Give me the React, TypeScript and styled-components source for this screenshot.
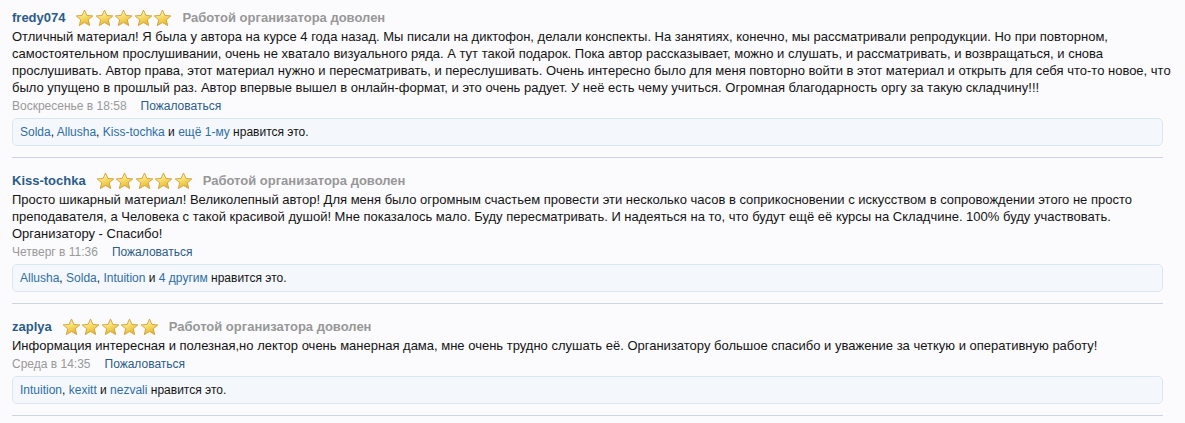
import React from "react";
import styled, { createGlobalStyle } from "styled-components";

const Global = createGlobalStyle`
  html, body { margin: 0; padding: 0; background: #fbfbfd; }
  body { font-family: "Liberation Sans", Arial, sans-serif; }
`;

const Page = styled.div`
  padding: 0 22px 0 12px;
`;

const Item = styled.div`
  padding-top: 7px;
`;

const Header = styled.div`
  display: flex;
  align-items: center;
  height: 21px;
`;

const User = styled.a`
  font-weight: bold;
  font-size: 13px;
  color: #2b5b89;
  text-decoration: none;
  margin-right: 10px;
`;

const Stars = styled.span`
  display: inline-flex;
  gap: 0.5px;
  margin-right: 10px;
`;

const Verdict = styled.span`
  font-weight: bold;
  font-size: 13px;
  color: #979797;
`;

const Body = styled.div`
  font-size: 13px;
  line-height: 17px;
  color: #141414;
  margin-right: -8px;
`;

const Meta = styled.div`
  margin-top: 2px;
  font-size: 12px;
  line-height: 17px;
  color: #999;
  display: flex;
  gap: 14px;
`;

const Link = styled.a`
  color: #2b5b89;
  text-decoration: none;
  cursor: pointer;
`;

const Likes = styled.div`
  margin-top: 3px;
  height: 28px;
  box-sizing: border-box;
  border: 1px solid #dbe7f0;
  border-radius: 5px;
  background: #f4f8fc;
  padding: 0 7px;
  font-size: 12px;
  line-height: 26px;
  color: #141414;
`;

const LikeLink = styled.a`
  color: #2f6ea5;
  text-decoration: none;
`;

const Divider = styled.div`
  margin: 11px 0 5px;
  height: 1px;
  background: #cdd3df;
`;

const Star: React.FC<{ id: string }> = ({ id }) => (
  <svg width="19" height="18" viewBox="0 0 19 18">
    <defs>
      <linearGradient id={id} x1="0" y1="0" x2="0.4" y2="1">
        <stop offset="0" stopColor="#fffbd0" />
        <stop offset="0.5" stopColor="#f8e070" />
        <stop offset="1" stopColor="#e8b830" />
      </linearGradient>
    </defs>
    <path
      d="M9.5 1 L11.9 6.4 L17.8 6.9 L13.3 10.8 L14.7 16.6 L9.5 13.5 L4.3 16.6 L5.7 10.8 L1.2 6.9 L7.1 6.4 Z"
      fill={`url(#${id})`}
      stroke="#cf9f3a"
      strokeWidth="0.9"
      strokeLinejoin="round"
    />
  </svg>
);

const Rating: React.FC<{ k: string }> = ({ k }) => (
  <Stars>
    {[0, 1, 2, 3, 4].map((i) => (
      <Star key={i} id={`g-${k}-${i}`} />
    ))}
  </Stars>
);

type Review = {
  user: string;
  text: string;
  date: string;
  likes: React.ReactNode;
};

const reviews: Review[] = [
  {
    user: "fredy074",
    text:
      "Отличный материал! Я была у автора на курсе 4 года назад. Мы писали на диктофон, делали конспекты. На занятиях, конечно, мы рассматривали репродукции. Но при повторном, самостоятельном прослушивании, очень не хватало визуального ряда. А тут такой подарок. Пока автор рассказывает, можно и слушать, и рассматривать, и возвращаться, и снова прослушивать. Автор права, этот материал нужно и пересматривать, и переслушивать. Очень интересно было для меня повторно войти в этот материал и открыть для себя что-то новое, что было упущено в прошлый раз. Автор впервые вышел в онлайн-формат, и это очень радует. У неё есть чему учиться. Огромная благодарность оргу за такую складчину!!!",
    date: "Воскресенье в 18:58",
    likes: (
      <>
        <LikeLink>Solda</LikeLink>, <LikeLink>Allusha</LikeLink>, <LikeLink>Kiss-tochka</LikeLink> и{" "}
        <LikeLink>ещё 1-му</LikeLink> нравится это.
      </>
    ),
  },
  {
    user: "Kiss-tochka",
    text:
      "Просто шикарный материал! Великолепный автор! Для меня было огромным счастьем провести эти несколько часов в соприкосновении с искусством в сопровождении этого не просто преподавателя, а Человека с такой красивой душой! Мне показалось мало. Буду пересматривать. И надеяться на то, что будут ещё её курсы на Складчине. 100% буду участвовать. Организатору - Спасибо!",
    date: "Четверг в 11:36",
    likes: (
      <>
        <LikeLink>Allusha</LikeLink>, <LikeLink>Solda</LikeLink>, <LikeLink>Intuition</LikeLink> и{" "}
        <LikeLink>4 другим</LikeLink> нравится это.
      </>
    ),
  },
  {
    user: "zaplya",
    text:
      "Информация интересная и полезная,но лектор очень манерная дама, мне очень трудно слушать её. Организатору большое спасибо и уважение за четкую и оперативную работу!",
    date: "Среда в 14:35",
    likes: (
      <>
        <LikeLink>Intuition</LikeLink>, <LikeLink>kexitt</LikeLink> и <LikeLink>nezvali</LikeLink> нравится
        это.
      </>
    ),
  },
];

export default function App() {
  return (
    <Page>
      <Global />
      {reviews.map((r, idx) => (
        <React.Fragment key={r.user}>
          <Item>
            <Header>
              <User>{r.user}</User>
              <Rating k={String(idx)} />
              <Verdict>Работой организатора доволен</Verdict>
            </Header>
            <Body>{r.text}</Body>
            <Meta>
              <span>{r.date}</span>
              <Link>Пожаловаться</Link>
            </Meta>
            <Likes>{r.likes}</Likes>
          </Item>
          <Divider />
        </React.Fragment>
      ))}
    </Page>
  );
}
